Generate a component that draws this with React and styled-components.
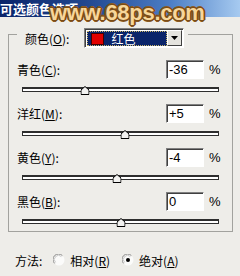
import React from "react";
import styled, { createGlobalStyle } from "styled-components";

const GlobalStyle = createGlobalStyle`
  body {
    margin: 0;
    background: #eeede9;
    font-family: "Noto Sans CJK SC", "Noto Sans", sans-serif;
    font-size: 12px;
    color: #000;
  }
`;

const Dialog = styled.div`
  position: relative;
  width: 240px;
  height: 276px;
  overflow: hidden;
  background: #eeede9;
`;

const TitleBar = styled.div`
  height: 17px;
  background: linear-gradient(90deg, #0a246a 0%, #21468e 35%, #4a7cc4 70%, #a6caf0 100%);
  color: #fff;
  font-weight: bold;
  font-size: 13px;
  line-height: 17px;
  white-space: nowrap;
`;

const Watermark = styled.div`
  position: absolute;
  left: 50px;
  top: 2px;
  font: bold 22px/22px "Liberation Sans", Arial, sans-serif;
  letter-spacing: -0.3px;
  color: #f7d69a;
  text-shadow: 1px 0 #7b4c17, -1px 0 #7b4c17, 0 1px #7b4c17, 0 -1px #7b4c17,
    1px 1px #7b4c17, -1px -1px #7b4c17, 1px -1px #7b4c17, -1px 1px #7b4c17,
    2px 0 #8a5a22, -2px 0 #8a5a22, 0 2px #8a5a22, 0 -2px #8a5a22;
  pointer-events: none;
`;

const Group = styled.fieldset`
  margin: 3px 0 0 8px;
  width: 225px;
  box-sizing: border-box;
  padding: 12px 8px 0 8px;
  border: 1px solid #a2a29e;
`;

const Legend = styled.legend`
  padding: 8px 4px 0 8px;
`;

const LegendInner = styled.div`
  display: flex;
  align-items: center;
  gap: 15px;
`;

const Select = styled.div`
  display: flex;
  width: 100px;
  height: 20px;
  box-sizing: border-box;
  padding: 1px;
  border: 1px solid;
  border-color: #808080 #fff #fff #808080;
  box-shadow: inset 1px 1px 0 #404040;
  background: #fff;
`;

const Selected = styled.div`
  flex: 1;
  display: flex;
  align-items: center;
  gap: 7px;
  padding-left: 4px;
  margin: 1px 0 0 1px;
  background: #0a246a;
  outline: 1px dotted #c9b56a;
  outline-offset: -1px;
  color: #fff;
`;

const Swatch = styled.span`
  width: 13px;
  height: 12px;
  background: ${(p) => p.color};
  border: 1px solid #400;
  box-sizing: border-box;
`;

const ArrowButton = styled.div`
  width: 15px;
  display: flex;
  align-items: center;
  justify-content: center;
  background: #e4e3de;
  border: 1px solid;
  border-color: #fff #404040 #404040 #fff;
  box-sizing: border-box;
`;

const Block = styled.div`
  margin-bottom: ${(p) => (p.last ? 0 : 5)}px;
`;

const Row = styled.div`
  display: flex;
  align-items: center;
  height: 19px;
`;

const Label = styled.span`
  flex: 1;
`;

const Field = styled.div`
  width: 38px;
  height: 19px;
  box-sizing: border-box;
  border: 1px solid;
  border-color: #808080 #fff #fff #808080;
  box-shadow: inset 1px 1px 0 #404040;
  background: #fff;
  padding: 1px 0 0 2px;
  font: 13px/16px "Liberation Sans", Arial, sans-serif;
`;

const Unit = styled.span`
  width: 15px;
  margin-left: 5px;
  font: 13px "Liberation Sans", Arial, sans-serif;
`;

const SliderWrap = styled.div`
  height: 20px;
  margin: 0 5px;
  display: flex;
  align-items: center;
`;

const Track = styled.div`
  position: relative;
  flex: 1;
  height: 5px;
  box-sizing: border-box;
  background: #fff;
  border: 1px solid #2e2e2e;
  border-top-width: 2px;
`;

const Thumb = styled.svg`
  position: absolute;
  top: -3px;
  transform: translateX(-50%);
`;

const Method = styled.div`
  display: flex;
  align-items: center;
  height: 16px;
  margin: 20px 0 0 15px;
`;

const MethodLabel = styled.span`
  margin-right: 11px;
`;

const Options = styled.div`
  display: flex;
  gap: 12px;
`;

const Option = styled.label`
  display: flex;
  align-items: center;
  gap: 5px;
`;

const Radio = ({ checked }) => (
  <svg width="12" height="12" viewBox="0 0 12 12">
    <circle cx="6" cy="6" r="5.5" fill="#fbfbfa" />
    <path d="M1.6 9.4 A5 5 0 0 1 9.4 1.6" fill="none" stroke="#8a8a8a" strokeWidth="1" />
    <path d="M2.6 8.4 A3.7 3.7 0 0 1 8.4 2.6" fill="none" stroke="#c8c8c8" strokeWidth="1" />
    {checked && <circle cx="6" cy="6" r="2" fill="#000" />}
  </svg>
);

const sliders = [
  { name: "青色", key: "C", value: -36 },
  { name: "洋红", key: "M", value: 5 },
  { name: "黄色", key: "Y", value: -4 },
  { name: "黑色", key: "B", value: 0 },
];

const fmt = (v) => (v > 0 ? "+" + v : String(v));

export default function App() {
  return (
    <Dialog>
      <GlobalStyle />
      <TitleBar>可选颜色选项</TitleBar>
      <Watermark>www.68ps.com</Watermark>
      <Group>
        <Legend>
          <LegendInner>
            <span>
              颜色(<u>O</u>):
            </span>
            <Select>
              <Selected>
                <Swatch color="#e00000" />
                <span>红色</span>
              </Selected>
              <ArrowButton>
                <svg width="7" height="4" viewBox="0 0 7 4">
                  <path d="M0 0H7L3.5 4Z" fill="#000" />
                </svg>
              </ArrowButton>
            </Select>
          </LegendInner>
        </Legend>
        {sliders.map((s, i) => (
          <Block key={s.key} last={i === sliders.length - 1}>
            <Row>
              <Label>
                {s.name}(<u>{s.key}</u>):
              </Label>
              <Field>{fmt(s.value)}</Field>
              <Unit>%</Unit>
            </Row>
            <SliderWrap>
              <Track>
                <Thumb
                  width="9"
                  height="9"
                  viewBox="0 0 9 9"
                  style={{ left: `${50 + s.value / 2}%` }}
                >
                  <path d="M0.5 8.5V4L4.5 0.5L8.5 4V8.5Z" fill="#f2f2f0" stroke="#000" />
                </Thumb>
              </Track>
            </SliderWrap>
          </Block>
        ))}
      </Group>
      <Method>
        <MethodLabel>方法:</MethodLabel>
        <Options>
          <Option>
            <Radio />
            <span>
              相对(<u>R</u>)
            </span>
          </Option>
          <Option>
            <Radio checked />
            <span>
              绝对(<u>A</u>)
            </span>
          </Option>
        </Options>
      </Method>
    </Dialog>
  );
}
